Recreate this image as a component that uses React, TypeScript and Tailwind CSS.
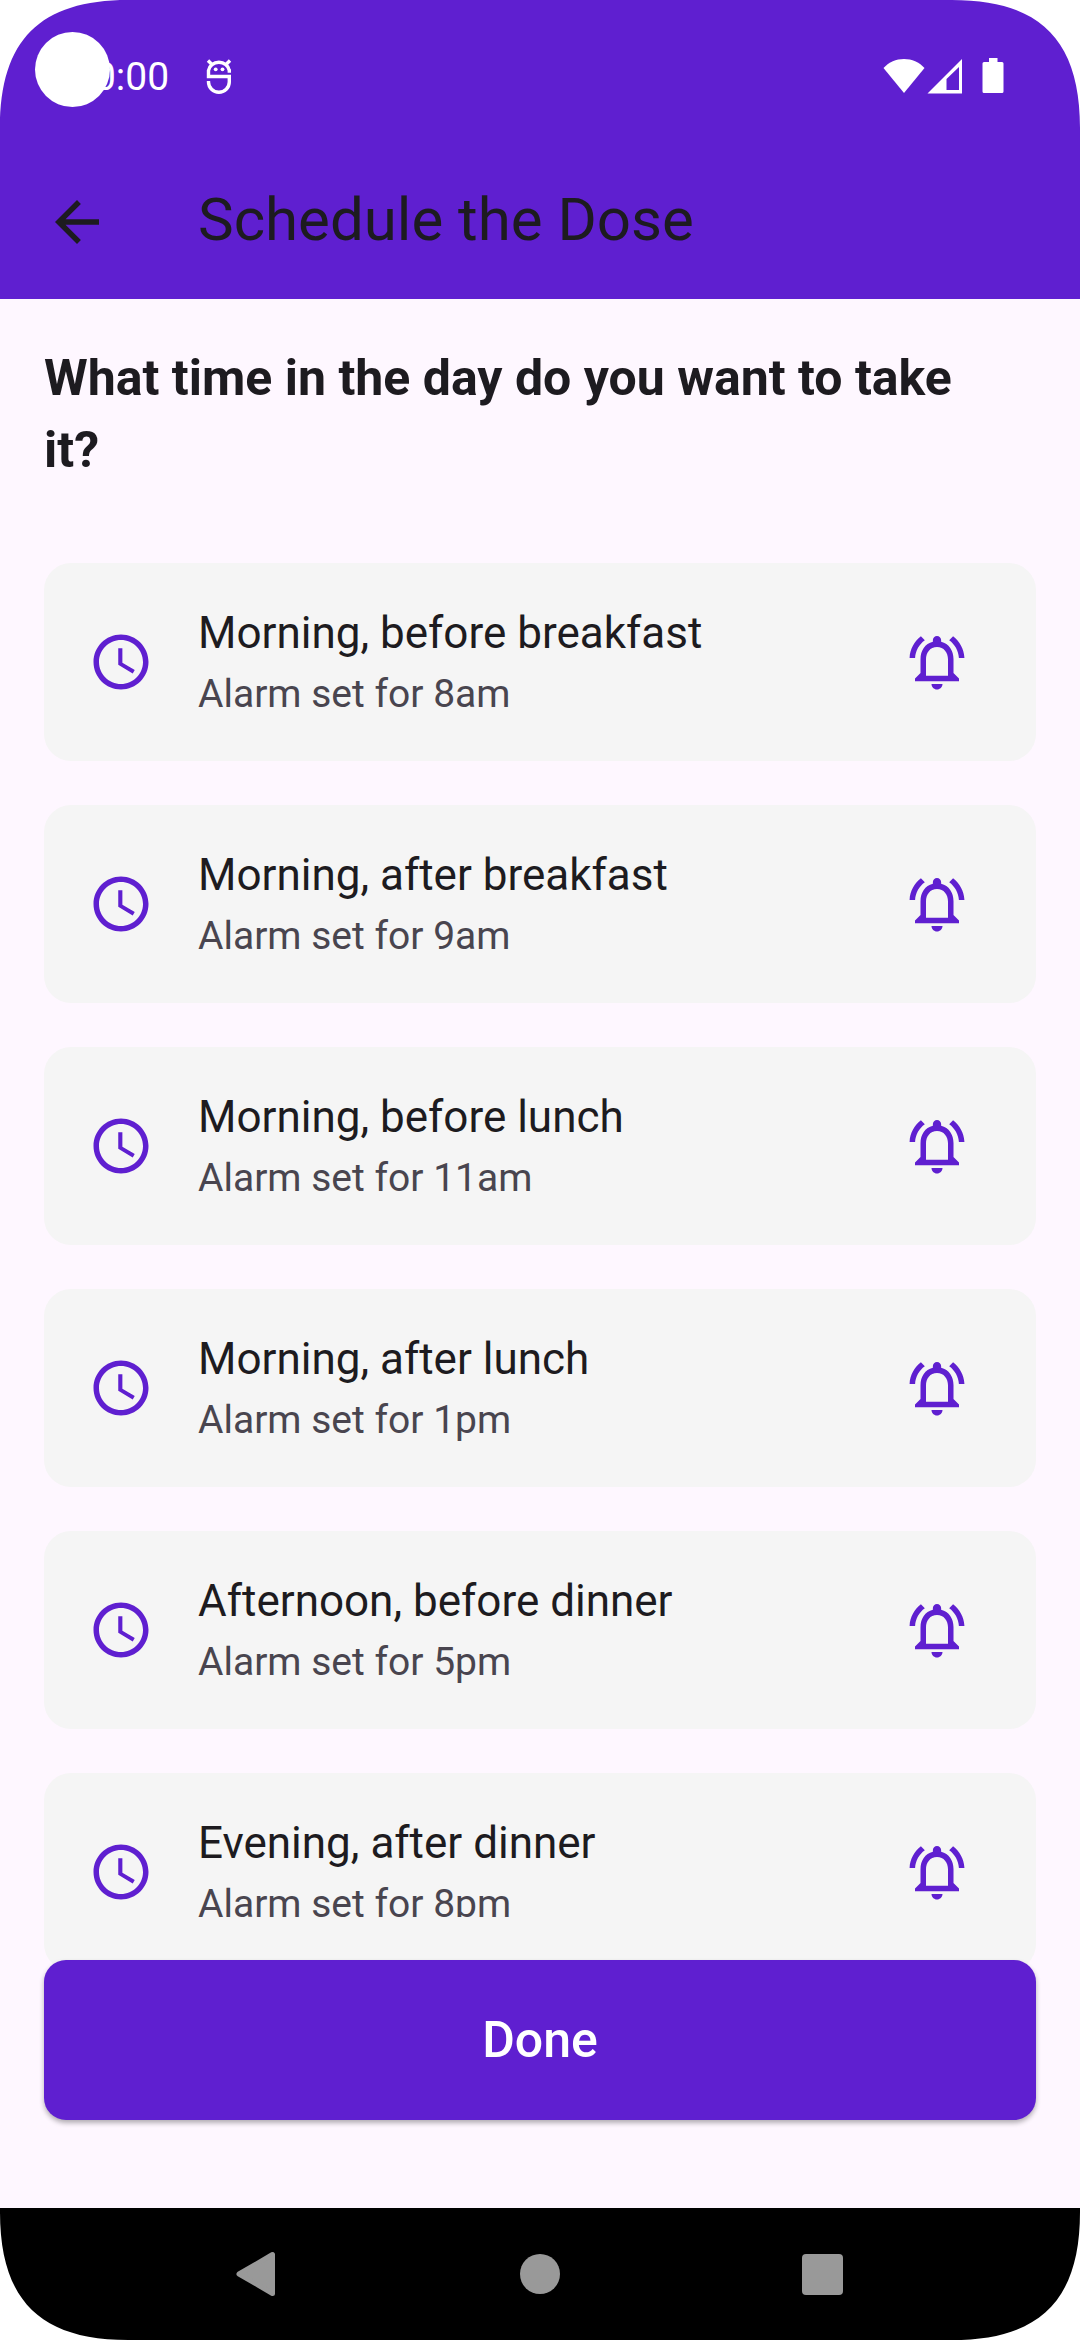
const ALARMS = [
  { title: "Morning, before breakfast", time: "8am" },
  { title: "Morning, after breakfast", time: "9am" },
  { title: "Morning, before lunch", time: "11am" },
  { title: "Morning, after lunch", time: "1pm" },
  { title: "Afternoon, before dinner", time: "5pm" },
  { title: "Evening, after dinner", time: "8pm" },
];

function ClockIcon() {
  return (
    <svg viewBox="0 0 24 24" className="size-[66px] shrink-0" fill="currentColor" aria-hidden="true">
      <path d="M11.99 2C6.47 2 2 6.48 2 12s4.47 10 9.99 10C17.52 22 22 17.52 22 12S17.52 2 11.99 2zM12 20c-4.42 0-8-3.58-8-8s3.58-8 8-8 8 3.58 8 8-3.58 8-8 8zm.5-13H11v6l5.25 3.15.75-1.23-4.5-2.67z" />
    </svg>
  );
}

function BellIcon() {
  return (
    <svg viewBox="0 0 24 24" className="size-[66px]" fill="currentColor" aria-hidden="true">
      <path d="M12 22c1.1 0 2-.9 2-2h-4c0 1.1.9 2 2 2zm6-6v-5c0-3.07-1.63-5.64-4.5-6.32V4c0-.83-.67-1.5-1.5-1.5s-1.5.67-1.5 1.5v.68C7.64 5.36 6 7.92 6 11v5l-2 2v1h16v-1l-2-2zm-2 1H8v-6c0-2.48 1.51-4.5 4-4.5s4 2.02 4 4.5v6zM7.58 4.08L6.15 2.65C3.75 4.48 2.17 7.3 2.03 10.5h2c.15-2.65 1.51-4.97 3.55-6.42zm12.39 6.42h2c-.15-3.2-1.73-6.02-4.12-7.85l-1.42 1.43c2.02 1.45 3.39 3.77 3.54 6.42z" />
    </svg>
  );
}

function StatusBar() {
  return (
    <div className="relative flex h-[145px] items-center justify-between pt-[6px] pr-[76px] pl-[72px] text-white">
      <div className="flex items-center gap-[37px]">
        <span className="pt-[2px] text-[39px] leading-[46px]">10:00</span>
        <svg viewBox="0 0 26 36" className="h-[36px] w-[26px]" fill="none" stroke="currentColor" strokeWidth="3.400" aria-hidden="true">
          <path d="M25 13H23.300V12.500A10.500 9.500 0 0 0 2.500 12.500V18.500H23.300V24A10.400 10.200 0 0 1 2.500 24V23" />
          <path d="M5.500 6L2 2.500M20.500 6L24 2.500" />
          <circle cx="9.700" cy="11.300" r="1.900" fill="currentColor" stroke="none" />
          <circle cx="16.500" cy="11.300" r="1.900" fill="currentColor" stroke="none" />
        </svg>
      </div>
      <div className="flex items-center">
        <svg viewBox="0 0 42 36" className="h-[36px] w-[42px]" fill="currentColor" aria-hidden="true">
          <path d="M21 35L0.500 10C6 4 13 1 21 1S36 4 41.500 10Z" />
        </svg>
        <svg viewBox="0 0 36 36" className="ml-[2px] h-[36px] w-[36px]" fill="currentColor" aria-hidden="true">
          <path fillRule="evenodd" d="M0.500 35.500L35 1V35.500ZM19.500 21V32H32V9Z" />
        </svg>
        <svg viewBox="0 0 22 36" className="ml-[19px] h-[36px] w-[22px]" fill="currentColor" aria-hidden="true">
          <path d="M7 0H15.500V4H20Q21.500 4 21.500 5.500V33.500Q21.500 35 20 35H2Q0.500 35 0.500 33.500V5.500Q0.500 4 2 4H7Z" />
        </svg>
      </div>
      <div className="absolute top-[32px] left-[35px] size-[75px] rounded-full bg-white" />
    </div>
  );
}

function Corner({ className }: { className: string }) {
  return (
    <svg viewBox="0 0 128 128" className={"pointer-events-none absolute size-[128px] " + className} fill="white" aria-hidden="true">
      <path d="M0 0H128C40 0 0 40 0 128Z" />
    </svg>
  );
}

function AlarmRow({ title, time, cut }: { title: string; time: string; cut: boolean }) {
  return (
    <li className="flex h-[198px] shrink-0 items-center rounded-[27px] bg-[#f5f5f5] pr-[66px] pl-[44px] text-[#5f1fd0]">
      <ClockIcon />
      <div className={cut ? "mb-[16px] ml-[44px] h-[106px] flex-1 overflow-hidden" : "ml-[44px] flex-1"}>
        <p className="text-[44px] leading-[64px] text-[#1d1b20]">{title}</p>
        <p className="text-[39px] leading-[58px] text-[#49454f]">Alarm set for {time}</p>
      </div>
      <button type="button" aria-label={"Toggle alarm: " + title}>
        <BellIcon />
      </button>
    </li>
  );
}

export default function App() {
  return (
    <div className="relative flex h-screen flex-col overflow-hidden bg-[#fef7ff] font-['Roboto',sans-serif] text-[#1d1b20]">
      <header className="bg-[#5f1fd0]">
        <StatusBar />
        <div className="flex h-[154px] items-center px-[44px]">
          <button type="button" aria-label="Back">
            <svg viewBox="0 0 24 24" className="size-[66px]" fill="currentColor" aria-hidden="true">
              <path d="M20 11H7.830l5.590-5.590L12 4l-8 8 8 8 1.410-1.410L7.830 13H20v-2z" />
            </svg>
          </button>
          <h1 className="ml-[88px] pb-[4px] text-[60px] leading-[76px]">Schedule the Dose</h1>
        </div>
      </header>

      <main className="flex min-h-0 flex-1 flex-col px-[44px] pt-[43px] pb-[88px]">
        <h2 className="mb-[77px] text-[50px] leading-[72px] font-bold">
          What time in the day do you want to take
          <br />
          it?
        </h2>
        <ul className="flex min-h-0 flex-1 flex-col gap-[44px]">
          {ALARMS.map((alarm, i) => (
            <AlarmRow key={alarm.title} title={alarm.title} time={alarm.time} cut={i === ALARMS.length - 1} />
          ))}
        </ul>
        <button
          type="button"
          className="relative h-[160px] shrink-0 rounded-[22px] bg-[#5f1fd0] text-[50px] leading-[60px] font-medium text-white shadow-[0_3px_5px_rgba(0,0,0,0.3)]"
        >
          Done
        </button>
      </main>

      <nav className="grid h-[132px] shrink-0 grid-cols-3 bg-black px-[117px] text-[#999999]">
        <button type="button" aria-label="Back" className="flex items-center justify-center">
          <svg viewBox="0 0 46 46" className="size-[46px]" fill="currentColor" stroke="currentColor" strokeWidth="5" strokeLinejoin="round" aria-hidden="true">
            <path d="M37.500 3.500V42.500L4 23Z" />
          </svg>
        </button>
        <button type="button" aria-label="Home" className="flex items-center justify-center">
          <span className="size-[40px] rounded-full bg-[#999999]" />
        </button>
        <button type="button" aria-label="Recent apps" className="flex items-center justify-center">
          <span className="size-[41px] rounded-[4px] bg-[#999999]" />
        </button>
      </nav>

      <Corner className="top-0 left-0" />
      <Corner className="top-0 right-0 rotate-90" />
      <Corner className="right-0 bottom-0 rotate-180" />
      <Corner className="bottom-0 left-0 -rotate-90" />
    </div>
  );
}
